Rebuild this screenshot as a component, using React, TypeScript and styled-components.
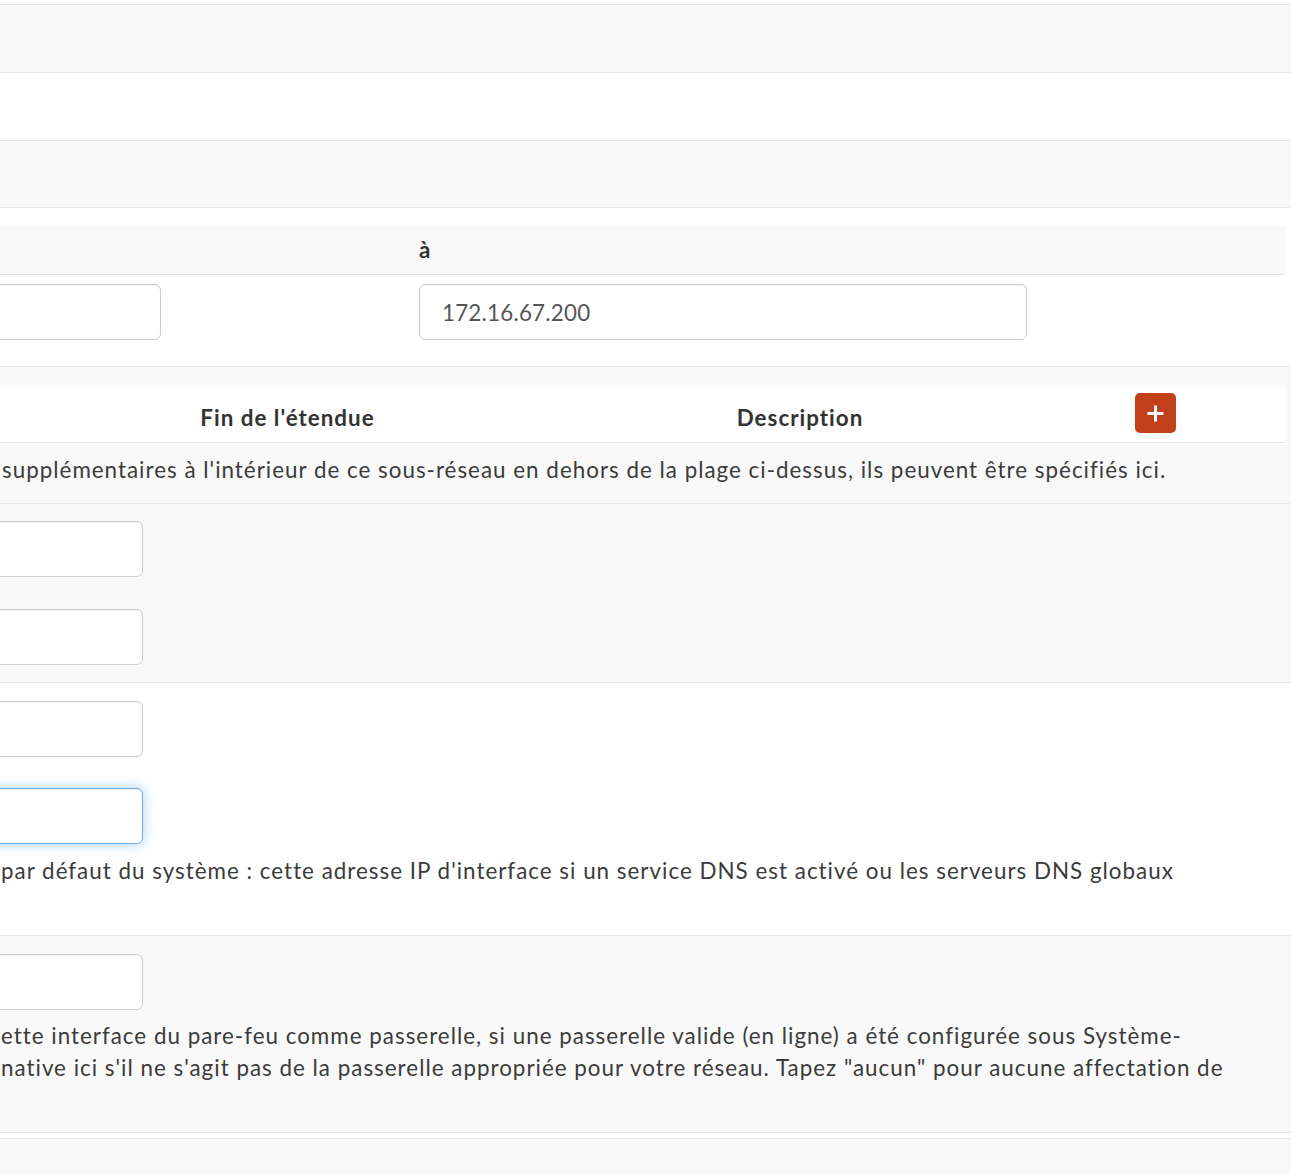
import React from "react";
import styled, { createGlobalStyle } from "styled-components";

// the screenshot shows the right-hand part of the form; this much lies left of the crop
const CROP = 447;

const GlobalStyle = createGlobalStyle`
  html, body {
    margin: 0;
    padding: 0;
    background: #ffffff;
  }
  body {
    font-family: Lato, "Noto Sans", "Liberation Sans", sans-serif;
    font-size: 22.4px;
    line-height: 32px;
    letter-spacing: 1px;
    color: #333333;
  }
  * { box-sizing: border-box; }
`;

export default function App() {
  return (
    <Viewport>
      <GlobalStyle />
      <Panel>
        <Row $shade $minHeight={68} />
        <Row $minHeight={68} />
        <Row $shade $minHeight={67} />

        <Row $bottom={26}>
          <Table $cols="1fr 1fr">
            <HeadRow $bg="#f9f9f9" $height={48}>
              <HeadCell>De</HeadCell>
              <HeadCell>à</HeadCell>
            </HeadRow>
            <BodyRow>
              <Input defaultValue="172.16.67.100" $width={608} />
              <Input defaultValue="172.16.67.200" $width={608} />
            </BodyRow>
          </Table>
        </Row>

        <Row $shade $bottom={17}>
          <Table $cols="452px 565px 460px 1fr">
            <HeadRow $bg="#ffffff" $height={57}>
              <HeadCell $center>Début de l'étendue</HeadCell>
              <HeadCell $center>Fin de l'étendue</HeadCell>
              <HeadCell $center>Description</HeadCell>
              <ActionCell>
                <AddButton type="button" aria-label="Ajouter">
                  <svg width="17" height="17" viewBox="0 0 17 17">
                    <path d="M8.5 0.5v16M0.5 8.5h16" stroke="#ffffff" strokeWidth="3" fill="none" />
                  </svg>
                </AddButton>
              </ActionCell>
            </HeadRow>
          </Table>
          <HelpText $gap={11} $lines={1} $nudge={2}>
            <HelpLine>
              supplémentaires à l'intérieur de ce sous-réseau en dehors de la plage ci-dessus, ils peuvent être spécifiés ici.
            </HelpLine>
          </HelpText>
        </Row>

        <Row $shade $top={17} $bottom={17}>
          <FieldStack $gap={32}>
            <Input $width={590} />
            <Input $width={590} />
          </FieldStack>
        </Row>

        <Row $bottom={16}>
          <FieldStack $gap={31}>
            <Input $width={590} />
            <Input $width={590} $focused />
          </FieldStack>
          <HelpText $gap={11} $lines={2} $nudge={1}>
            <HelpLine>
              par défaut du système : cette adresse IP d'interface si un service DNS est activé ou les serveurs DNS globaux
            </HelpLine>
          </HelpText>
        </Row>

        <Row $shade $bottom={16}>
          <FieldStack $gap={0}>
            <Input $width={590} />
          </FieldStack>
          <HelpText $gap={10} $lines={3} $nudge={1}>
            <HelpLine>
              <Cut>c</Cut>ette interface du pare-feu comme passerelle, si une passerelle valide (en ligne) a été configurée sous Système-
            </HelpLine>
            <HelpLine>
              <Cut>alter</Cut>native ici s'il ne s'agit pas de la passerelle appropriée pour votre réseau. Tapez "aucun" pour aucune affectation de
            </HelpLine>
          </HelpText>
        </Row>
      </Panel>
      <NextPanel />
    </Viewport>
  );
}

const Viewport = styled.div`
  width: 1291px;
  height: 1174px;
  overflow: hidden;
  padding-top: 4px;
  background: #ffffff;
`;

const Panel = styled.section`
  margin-left: -${CROP}px;
  width: calc(100% + ${CROP}px);
  border-top: 1px solid #e6e6e6;
  margin-bottom: 5px;
`;

const Row = styled.div<{ $shade?: boolean; $minHeight?: number; $top?: number; $bottom?: number }>`
  display: flex;
  flex-direction: column;
  min-height: ${(p) => (p.$minHeight ? `${p.$minHeight}px` : "0")};
  padding: ${(p) => (p.$minHeight ? 0 : p.$top ?? 18)}px 6px ${(p) => (p.$minHeight ? 0 : p.$bottom ?? 16)}px 0;
  background: ${(p) => (p.$shade ? "#f9f9f9" : "#ffffff")};
  border-bottom: 1px solid #e6e6e6;
`;

const Table = styled.div<{ $cols: string }>`
  display: grid;
  grid-template-columns: ${(p) => p.$cols};
`;

const HeadRow = styled.div<{ $bg: string; $height: number }>`
  grid-column: 1 / -1;
  display: grid;
  grid-template-columns: subgrid;
  height: ${(p) => p.$height + 1}px;
  background: ${(p) => p.$bg};
  border-bottom: 1px solid #e3e3e3;
`;

const HeadCell = styled.div<{ $center?: boolean }>`
  display: flex;
  align-items: flex-end;
  justify-content: ${(p) => (p.$center ? "center" : "flex-start")};
  padding-bottom: 8px;
  font-weight: 700;
  color: #333333;
  white-space: nowrap;
`;

const ActionCell = styled.div`
  display: flex;
  align-items: center;
  justify-content: center;
  padding-right: 4px;
`;

const AddButton = styled.button`
  display: flex;
  align-items: center;
  justify-content: center;
  width: 41px;
  height: 40px;
  margin-top: -1px;
  padding: 0;
  border: none;
  border-radius: 5px;
  background: #c1401a;
  cursor: pointer;
`;

const BodyRow = styled.div`
  grid-column: 1 / -1;
  display: grid;
  grid-template-columns: subgrid;
  padding-top: 9px;
`;

const FieldStack = styled.div<{ $gap: number }>`
  display: flex;
  flex-direction: column;
  gap: ${(p) => p.$gap}px;
`;

const Input = styled.input<{ $width: number; $focused?: boolean }>`
  width: ${(p) => p.$width}px;
  height: 56px;
  padding: 0 22px;
  border: 1px solid ${(p) => (p.$focused ? "#66afe9" : "#cccccc")};
  border-radius: 6px;
  background: #ffffff;
  font-family: inherit;
  font-size: 22.4px;
  letter-spacing: 0.2px;
  color: #555555;
  outline: none;
  box-shadow: ${(p) =>
    p.$focused
      ? "inset 0 1px 1px rgba(0,0,0,.075), 0 0 13px rgba(102,175,233,.6)"
      : "inset 0 1px 1px rgba(0,0,0,.05)"};
`;

const HelpText = styled.div<{ $gap: number; $lines: number; $nudge: number }>`
  margin-top: ${(p) => p.$gap}px;
  padding-left: ${(p) => CROP + p.$nudge}px;
  min-height: ${(p) => p.$lines * 32}px;
  color: #3b3b3b;
  white-space: nowrap;
`;

const HelpLine = styled.div`
  height: 32px;
`;

// part of the first word that falls left of the crop edge
const Cut = styled.span`
  display: inline-block;
  width: 0;
  direction: rtl;
  white-space: nowrap;
`;

const NextPanel = styled.section`
  margin-left: -${CROP}px;
  height: 80px;
  background: #f8f8f8;
  border-top: 1px solid #e6e6e6;
`;
